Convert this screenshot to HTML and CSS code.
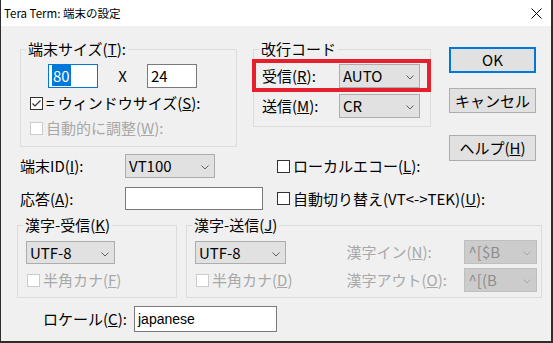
FILE: index.html
```html
<!DOCTYPE html>
<html lang="ja">
<head>
<meta charset="utf-8">
<title>Tera Term: 端末の設定</title>
<link rel="stylesheet" href="styles.css">
</head>
<body>
<div class="window">
  <div class="titlebar">
    <span class="title">Tera Term: 端末の設定</span>
    <svg class="close" width="11" height="11" viewBox="0 0 11 11"><path d="M0.5 0.5L10.5 10.5M10.5 0.5L0.5 10.5" stroke="#000" stroke-width="1" fill="none"/></svg>
  </div>
  <div class="content">
    <div class="upper">
      <div class="upper-main">
        <div class="top-groups">
          <div class="group g-size">
            <span class="caption">端末サイズ(<u>T</u>):</span>
            <div class="size-row">
              <div class="textbox focused w50"><span class="selected">80</span></div>
              <span class="times">X</span>
              <div class="textbox w50">24</div>
            </div>
            <div class="check-row cr-a"><span class="cb"><svg width="11" height="11" viewBox="0 0 11 11"><path d="M1.5 5.5L4 8L9.5 2.5" stroke="#333" stroke-width="1.2" fill="none"/></svg></span>= ウィンドウサイズ(<u>S</u>):</div>
            <div class="check-row cr-b disabled"><span class="cb"></span>自動的に調整(<u>W</u>):</div>
          </div>
          <div class="group g-nl">
            <span class="caption">改行コード</span>
            <div class="field-row">
              <span class="lbl">受信(<u>R</u>):</span>
              <div class="combo w81">AUTO<svg class="chev" width="8" height="5" viewBox="0 0 8 5"><path d="M0.5 0.5L4 4L7.5 0.5" stroke="#606060" fill="none"/></svg></div>
            </div>
            <div class="field-row second">
              <span class="lbl">送信(<u>M</u>):</span>
              <div class="combo w81">CR<svg class="chev" width="8" height="5" viewBox="0 0 8 5"><path d="M0.5 0.5L4 4L7.5 0.5" stroke="#606060" fill="none"/></svg></div>
            </div>
            <div class="annot"></div>
          </div>
        </div>
        <div class="form-grid">
          <span class="flabel">端末ID(<u>I</u>):</span>
          <div class="combo w90">VT100<svg class="chev" width="8" height="5" viewBox="0 0 8 5"><path d="M0.5 0.5L4 4L7.5 0.5" stroke="#606060" fill="none"/></svg></div>
          <div class="check-row"><span class="cb"></span>ローカルエコー(<u>L</u>):</div>
          <span class="flabel">応答(<u>A</u>):</span>
          <div class="textbox answer"></div>
          <div class="check-row"><span class="cb"></span>自動切り替え(VT&lt;-&gt;TEK)(<u>U</u>):</div>
        </div>
      </div>
      <div class="buttons">
        <div class="btn ok">OK</div>
        <div class="btn cancel">キャンセル</div>
        <div class="btn help">ヘルプ(<u>H</u>)</div>
      </div>
    </div>
    <div class="lower">
      <div class="group g-kr">
        <span class="caption">漢字-受信(<u>K</u>)</span>
        <div class="combo w89">UTF-8<svg class="chev" width="8" height="5" viewBox="0 0 8 5"><path d="M0.5 0.5L4 4L7.5 0.5" stroke="#606060" fill="none"/></svg></div>
        <div class="check-row kana disabled"><span class="cb"></span>半角カナ(<u>F</u>)</div>
      </div>
      <div class="group g-ks">
        <span class="caption">漢字-送信(<u>J</u>)</span>
        <div class="ks-a">
          <div class="combo w91">UTF-8<svg class="chev" width="8" height="5" viewBox="0 0 8 5"><path d="M0.5 0.5L4 4L7.5 0.5" stroke="#606060" fill="none"/></svg></div>
          <div class="check-row kana disabled"><span class="cb"></span>半角カナ(<u>D</u>)</div>
        </div>
        <div class="ks-b">
          <span class="flabel disabled">漢字イン(<u>N</u>):</span>
          <div class="combo w73 off">^[$B<svg class="chev" width="8" height="5" viewBox="0 0 8 5"><path d="M0.5 0.5L4 4L7.5 0.5" stroke="#a8a8a8" fill="none"/></svg></div>
          <span class="flabel disabled">漢字アウト(<u>O</u>):</span>
          <div class="combo w73 off">^[(B<svg class="chev" width="8" height="5" viewBox="0 0 8 5"><path d="M0.5 0.5L4 4L7.5 0.5" stroke="#a8a8a8" fill="none"/></svg></div>
        </div>
      </div>
    </div>
    <div class="locale-row">
      <span class="loc-lbl">ロケール(<u>C</u>):</span>
      <div class="textbox locale">japanese</div>
    </div>
  </div>
</div>
</body>
</html>
```

FILE: styles.css
```css
html, body {
  margin: 0;
  padding: 0;
  background: #f0f0f0;
}
.window {
  width: 553px;
  height: 343px;
  box-sizing: border-box;
  border-left: 1px solid #2e2e2e;
  border-right: 2px solid #2e2e2e;
  border-bottom: 2px solid #2e2e2e;
  background: #f0f0f0;
  font-family: "Noto Sans CJK JP", sans-serif;
  font-size: 15px;
  line-height: 18px;
  color: #000;
  overflow: hidden;
}
.titlebar {
  height: 26px;
  background: #fff;
  display: flex;
  align-items: center;
  padding-left: 3px;
}
.title {
  font-family: "Noto Sans CJK JP", sans-serif;
  font-size: 11.5px;
  line-height: 16px;
}
.close {
  margin-left: auto;
  margin-right: 9px;
}
.content {
  padding: 21px 0 0 16px;
}
.upper {
  display: flex;
  margin-left: 3px;
}
.upper-main {
  width: 411px;
  flex: none;
}
.top-groups {
  display: flex;
  align-items: flex-start;
  margin-top: 2px;
}
.group {
  position: relative;
  border: 1px solid #dcdcdc;
  box-sizing: border-box;
}
.caption {
  position: absolute;
  top: -10px;
  left: 5px;
  padding: 0 2px;
  background: #f0f0f0;
  white-space: nowrap;
}
.g-size {
  width: 217px;
  height: 98px;
  padding-top: 14px;
}
.size-row {
  display: flex;
  margin-left: 27px;
  height: 24px;
}
.textbox {
  height: 24px;
  box-sizing: border-box;
  border: 1px solid #7a7a7a;
  background: #fff;
  padding-left: 3px;
  line-height: 22px;
  white-space: nowrap;
}
.textbox.focused {
  border-color: #0078d7;
}
.w50 { width: 50px; }
.selected {
  background: #0078d7;
  color: #fff;
  padding: 0 1px;
}
.times {
  width: 49px;
  text-align: center;
  line-height: 24px;
}
.check-row {
  display: flex;
  align-items: center;
  height: 20px;
  white-space: nowrap;
}
.cr-a { margin: 5px 0 0 9px; }
.cr-b { margin: 5px 0 0 9px; }
.cb {
  width: 13px;
  height: 13px;
  box-sizing: border-box;
  border: 1px solid #333;
  background: #fff;
  margin-right: 3px;
  flex: none;
  display: flex;
  align-items: center;
  justify-content: center;
}
.disabled {
  color: #a8a8a8;
}
.disabled .cb {
  border-color: #cccccc;
}
.g-nl {
  width: 178px;
  height: 78px;
  margin-left: 16px;
  padding-top: 14px;
}
.field-row {
  display: flex;
  align-items: center;
  height: 24px;
  margin-left: 8px;
}
.field-row.second { margin-top: 6px; }
.lbl { width: 77px; }
.combo {
  position: relative;
  height: 24px;
  box-sizing: border-box;
  border: 1px solid #adadad;
  background: #e1e1e1;
  padding-left: 3px;
  line-height: 22px;
  white-space: nowrap;
}
.combo .chev {
  position: absolute;
  right: 5px;
  top: 10px;
}
.combo.off {
  background: #cccccc;
  border-color: #bfbfbf;
  color: #8c8c8c;
}
.w81 { width: 81px; }
.w90 { width: 90px; }
.w89 { width: 89px; height: 23px; line-height: 21px; }
.w91 { width: 91px; height: 23px; line-height: 21px; }
.w73 { width: 73px; }
.annot {
  position: absolute;
  left: -2px;
  top: 9px;
  width: 179px;
  height: 33px;
  box-sizing: border-box;
  border: 4px solid #e5202a;
}
.form-grid {
  display: grid;
  grid-template-columns: 105px 152px 154px;
  grid-template-rows: 24px 23px;
  row-gap: 9px;
  margin-top: 7px;
  align-items: center;
}
.flabel { white-space: nowrap; }
.textbox.answer {
  width: 138px;
  height: 23px;
}
.buttons {
  margin-left: 18px;
  display: flex;
  flex-direction: column;
}
.btn {
  width: 87px;
  height: 26px;
  box-sizing: border-box;
  border: 1px solid #adadad;
  background: #e1e1e1;
  display: flex;
  align-items: center;
  justify-content: center;
  white-space: nowrap;
}
.btn.ok { border: 2px solid #0078d7; }
.btn.cancel { margin-top: 15px; height: 25px; }
.btn.help { margin-top: 22px; }
.lower {
  display: flex;
  margin-top: 15px;
}
.g-kr {
  width: 160px;
  height: 73px;
  padding: 15px 0 0 8px;
}
.kana {
  margin: 6px 0 0 1px;
}
.g-ks {
  width: 356px;
  height: 73px;
  margin-left: 9px;
  padding: 14px 0 0 8px;
  display: flex;
}
.ks-a {
  margin-top: 1px;
}
.ks-b {
  margin-left: 54px;
  display: grid;
  grid-template-columns: 118px 73px;
  grid-template-rows: 24px 24px;
  row-gap: 4px;
  align-items: center;
}
.locale-row {
  display: flex;
  align-items: center;
  margin: 8px 0 0 26px;
}
.loc-lbl { width: 91px; }
.textbox.locale {
  width: 143px;
  height: 26px;
  line-height: 24px;
  font-family: "Liberation Sans", sans-serif;
  font-size: 14px;
}
```
